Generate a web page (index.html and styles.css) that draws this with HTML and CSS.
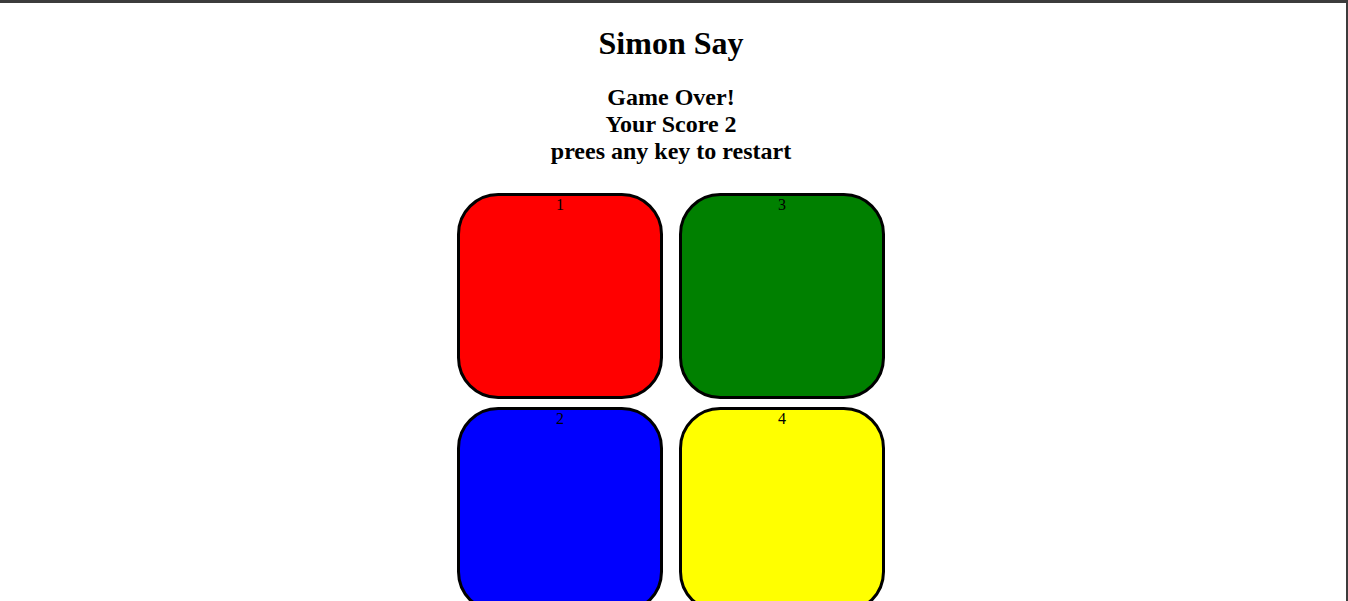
FILE: index.html
```html
<!DOCTYPE html>
<html lang="en">
<head>
<meta charset="utf-8">
<title>Simon Say</title>
<link rel="stylesheet" href="styles.css">
</head>
<body>
<h1 class="title">Simon Say</h1>
<h2 class="status">Game Over!<br>Your Score 2<br>prees any key to restart</h2>
<div class="board">
  <div class="btn red">1</div>
  <div class="btn green">3</div>
  <div class="btn blue">2</div>
  <div class="btn yellow">4</div>
</div>
</body>
</html>
```
FILE: styles.css
```css
html {
  background: #3c3c3c;
  padding: 3px 2px 0 0;
  height: 100%;
  box-sizing: border-box;
}
body {
  margin: 0;
  padding: 8px 12px 8px 8px;
  background: #fff;
  min-height: 100%;
  box-sizing: border-box;
  font-family: "Liberation Serif", "Times New Roman", serif;
  text-align: center;
  color: #000;
}
.title {
  font-size: 32px;
  margin: 14.44px 0 21.44px;
}
.status {
  font-size: 24px;
  margin: 19.92px 0 28px;
}
.board {
  display: grid;
  grid-template-columns: 206px 206px;
  column-gap: 16px;
  row-gap: 8px;
  justify-content: center;
}
.btn {
  height: 206px;
  box-sizing: border-box;
  border: 3px solid #000;
  border-radius: 20%;
  font-size: 16px;
  line-height: 18px;
}
.red { background: red; }
.green { background: green; }
.blue { background: blue; }
.yellow { background: yellow; }
```
